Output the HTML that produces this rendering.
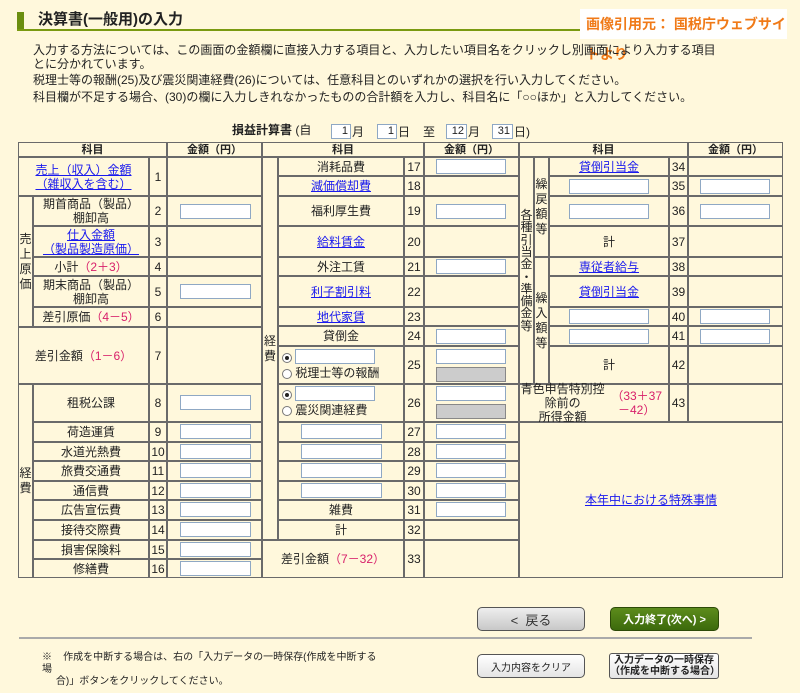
<!DOCTYPE html>
<html><head><meta charset="utf-8">
<style>
*{margin:0;padding:0;box-sizing:border-box}
body{width:800px;height:693px;background:#fff8dc;font-family:"Liberation Sans","Noto Sans CJK JP",sans-serif;color:#222;position:relative;overflow:hidden;font-size:12px}
.a{position:absolute}
.c{position:absolute;border:1px solid #6a6a6a;display:flex;align-items:center;justify-content:center;text-align:center;font-size:12px;line-height:14px}
.h{font-weight:bold;font-size:11px}
.in{position:absolute;background:#fff;border:1px solid #8fa8c4;height:15px}
.g{position:absolute;background:#ccc;border:1px solid #888;height:15px}
a,.lk{color:#1a1aee;text-decoration:underline}
.p{color:#d8206a}
.v{line-height:15px}
.rd{display:inline-block;width:10px;height:10px;border:1px solid #777;border-radius:50%;background:#fff;vertical-align:middle;position:relative}
.rd.on:after{content:"";position:absolute;left:2px;top:2px;width:4px;height:4px;border-radius:50%;background:#222}
.btn{position:absolute;border-radius:5px;display:flex;align-items:center;justify-content:center;text-align:center}
</style></head><body>
<div class="a" style="left:17px;top:12px;width:7px;height:17px;background:#6b8e0f"></div>
<div class="a" style="left:38px;top:10px;font-size:15px;font-weight:bold;line-height:20px">決算書(一般用)の入力</div>
<div class="a" style="left:17px;top:29px;width:566px;height:2px;background:#7a9a10"></div>
<div class="a" style="left:580px;top:9px;width:207px;height:30px;background:#fff;color:#f07a18;font-weight:bold;font-size:14px;line-height:30px;padding-left:6px">画像引用元： 国税庁ウェブサイトより</div>
<div class="a" style="left:33px;top:43px;line-height:14px;font-size:12px">入力する方法については、この画面の金額欄に直接入力する項目と、入力したい項目名をクリックし別画面により入力する項目<br>とに分かれています。</div>
<div class="a" style="left:33px;top:73px;line-height:14px">税理士等の報酬(25)及び震災関連経費(26)については、任意科目とのいずれかの選択を行い入力してください。</div>
<div class="a" style="left:33px;top:90px;line-height:14px">科目欄が不足する場合、(30)の欄に入力しきれなかったものの合計額を入力し、科目名に「○○ほか」と入力してください。</div>

<div class="a" style="left:232px;top:123px;line-height:15px"><b>損益計算書</b> (自</div>
<div class="in" style="left:331px;top:124px;width:20px;font-size:11px;text-align:right;line-height:13px;padding-right:2px">1</div><div class="a" style="left:352px;top:123px">月</div>
<div class="in" style="left:377px;top:124px;width:20px;font-size:11px;text-align:right;line-height:13px;padding-right:2px">1</div><div class="a" style="left:398px;top:123px">日</div>
<div class="a" style="left:423px;top:123px">至</div>
<div class="in" style="left:446px;top:124px;width:21px;font-size:11px;text-align:right;line-height:13px;padding-right:2px">12</div><div class="a" style="left:468px;top:123px">月</div>
<div class="in" style="left:492px;top:124px;width:21px;font-size:11px;text-align:right;line-height:13px;padding-right:2px">31</div><div class="a" style="left:514px;top:123px">日)</div>

<!-- header -->
<div class="c h" style="left:18px;top:142px;width:149px;height:15px">科目</div>
<div class="c h" style="left:167px;top:142px;width:95px;height:15px">金額（円）</div>
<div class="c h" style="left:262px;top:142px;width:162px;height:15px">科目</div>
<div class="c h" style="left:424px;top:142px;width:95px;height:15px">金額（円）</div>
<div class="c h" style="left:519px;top:142px;width:169px;height:15px">科目</div>
<div class="c h" style="left:688px;top:142px;width:95px;height:15px">金額（円）</div>

<!-- left -->
<div class="c" style="left:18px;top:157px;width:131px;height:39px"><span class="lk">売上（収入）金額<br>（雑収入を含む）</span></div>
<div class="c" style="left:149px;top:157px;width:18px;height:39px">1</div>
<div class="c" style="left:167px;top:157px;width:95px;height:39px"></div>
<div class="c v" style="left:18px;top:196px;width:15px;height:131px">売<br>上<br>原<br>価</div>
<div class="c" style="left:33px;top:196px;width:116px;height:30px">期首商品（製品）<br>棚卸高</div>
<div class="c" style="left:149px;top:196px;width:18px;height:30px">2</div>
<div class="c" style="left:167px;top:196px;width:95px;height:30px"></div>
<div class="c" style="left:33px;top:226px;width:116px;height:31px"><span class="lk">仕入金額<br>（製品製造原価）</span></div>
<div class="c" style="left:149px;top:226px;width:18px;height:31px">3</div>
<div class="c" style="left:167px;top:226px;width:95px;height:31px"></div>
<div class="c" style="left:33px;top:257px;width:116px;height:19px">小計<span class="p">（2＋3）</span></div>
<div class="c" style="left:149px;top:257px;width:18px;height:19px">4</div>
<div class="c" style="left:167px;top:257px;width:95px;height:19px"></div>
<div class="c" style="left:33px;top:276px;width:116px;height:31px">期末商品（製品）<br>棚卸高</div>
<div class="c" style="left:149px;top:276px;width:18px;height:31px">5</div>
<div class="c" style="left:167px;top:276px;width:95px;height:31px"></div>
<div class="c" style="left:33px;top:307px;width:116px;height:20px">差引原価<span class="p">（4－5）</span></div>
<div class="c" style="left:149px;top:307px;width:18px;height:20px">6</div>
<div class="c" style="left:167px;top:307px;width:95px;height:20px"></div>
<div class="c" style="left:18px;top:327px;width:131px;height:57px">差引金額<span class="p">（1－6）</span></div>
<div class="c" style="left:149px;top:327px;width:18px;height:57px">7</div>
<div class="c" style="left:167px;top:327px;width:95px;height:57px"></div>
<div class="c v" style="left:18px;top:384px;width:15px;height:194px">経<br>費</div>
<div class="c" style="left:33px;top:384px;width:116px;height:38px">租税公課</div>
<div class="c" style="left:149px;top:384px;width:18px;height:38px">8</div>
<div class="c" style="left:167px;top:384px;width:95px;height:38px"></div>
<div class="c" style="left:33px;top:422px;width:116px;height:20px">荷造運賃</div><div class="c" style="left:149px;top:422px;width:18px;height:20px">9</div><div class="c" style="left:167px;top:422px;width:95px;height:20px"></div>
<div class="c" style="left:33px;top:442px;width:116px;height:19px">水道光熱費</div><div class="c" style="left:149px;top:442px;width:18px;height:19px">10</div><div class="c" style="left:167px;top:442px;width:95px;height:19px"></div>
<div class="c" style="left:33px;top:461px;width:116px;height:20px">旅費交通費</div><div class="c" style="left:149px;top:461px;width:18px;height:20px">11</div><div class="c" style="left:167px;top:461px;width:95px;height:20px"></div>
<div class="c" style="left:33px;top:481px;width:116px;height:19px">通信費</div><div class="c" style="left:149px;top:481px;width:18px;height:19px">12</div><div class="c" style="left:167px;top:481px;width:95px;height:19px"></div>
<div class="c" style="left:33px;top:500px;width:116px;height:20px">広告宣伝費</div><div class="c" style="left:149px;top:500px;width:18px;height:20px">13</div><div class="c" style="left:167px;top:500px;width:95px;height:20px"></div>
<div class="c" style="left:33px;top:520px;width:116px;height:20px">接待交際費</div><div class="c" style="left:149px;top:520px;width:18px;height:20px">14</div><div class="c" style="left:167px;top:520px;width:95px;height:20px"></div>
<div class="c" style="left:33px;top:540px;width:116px;height:19px">損害保険料</div><div class="c" style="left:149px;top:540px;width:18px;height:19px">15</div><div class="c" style="left:167px;top:540px;width:95px;height:19px"></div>
<div class="c" style="left:33px;top:559px;width:116px;height:19px">修繕費</div><div class="c" style="left:149px;top:559px;width:18px;height:19px">16</div><div class="c" style="left:167px;top:559px;width:95px;height:19px"></div>
<div class="in" style="left:180px;top:204px;width:71px"></div>
<div class="in" style="left:180px;top:284px;width:71px"></div>
<div class="in" style="left:180px;top:395px;width:71px"></div>
<div class="in" style="left:180px;top:424px;width:71px"></div>
<div class="in" style="left:180px;top:444px;width:71px"></div>
<div class="in" style="left:180px;top:463px;width:71px"></div>
<div class="in" style="left:180px;top:483px;width:71px"></div>
<div class="in" style="left:180px;top:502px;width:71px"></div>
<div class="in" style="left:180px;top:522px;width:71px"></div>
<div class="in" style="left:180px;top:542px;width:71px"></div>
<div class="in" style="left:180px;top:561px;width:71px"></div>

<!-- middle -->
<div class="c v" style="left:262px;top:157px;width:16px;height:383px">経<br>費</div>
<div class="c" style="left:278px;top:157px;width:126px;height:19px">消耗品費</div><div class="c" style="left:404px;top:157px;width:20px;height:19px">17</div><div class="c" style="left:424px;top:157px;width:95px;height:19px"></div>
<div class="c" style="left:278px;top:176px;width:126px;height:20px"><span class="lk">減価償却費</span></div><div class="c" style="left:404px;top:176px;width:20px;height:20px">18</div><div class="c" style="left:424px;top:176px;width:95px;height:20px"></div>
<div class="c" style="left:278px;top:196px;width:126px;height:30px">福利厚生費</div><div class="c" style="left:404px;top:196px;width:20px;height:30px">19</div><div class="c" style="left:424px;top:196px;width:95px;height:30px"></div>
<div class="c" style="left:278px;top:226px;width:126px;height:31px"><span class="lk">給料賃金</span></div><div class="c" style="left:404px;top:226px;width:20px;height:31px">20</div><div class="c" style="left:424px;top:226px;width:95px;height:31px"></div>
<div class="c" style="left:278px;top:257px;width:126px;height:19px">外注工賃</div><div class="c" style="left:404px;top:257px;width:20px;height:19px">21</div><div class="c" style="left:424px;top:257px;width:95px;height:19px"></div>
<div class="c" style="left:278px;top:276px;width:126px;height:31px"><span class="lk">利子割引料</span></div><div class="c" style="left:404px;top:276px;width:20px;height:31px">22</div><div class="c" style="left:424px;top:276px;width:95px;height:31px"></div>
<div class="c" style="left:278px;top:307px;width:126px;height:19px"><span class="lk">地代家賃</span></div><div class="c" style="left:404px;top:307px;width:20px;height:19px">23</div><div class="c" style="left:424px;top:307px;width:95px;height:19px"></div>
<div class="c" style="left:278px;top:326px;width:126px;height:20px">貸倒金</div><div class="c" style="left:404px;top:326px;width:20px;height:20px">24</div><div class="c" style="left:424px;top:326px;width:95px;height:20px"></div>
<div class="c" style="left:278px;top:346px;width:126px;height:38px;justify-content:flex-start;align-items:flex-start"></div><div class="c" style="left:404px;top:346px;width:20px;height:38px">25</div><div class="c" style="left:424px;top:346px;width:95px;height:38px"></div>
<div class="c" style="left:278px;top:384px;width:126px;height:38px"></div><div class="c" style="left:404px;top:384px;width:20px;height:38px">26</div><div class="c" style="left:424px;top:384px;width:95px;height:38px"></div>
<div class="c" style="left:278px;top:422px;width:126px;height:20px"></div><div class="c" style="left:404px;top:422px;width:20px;height:20px">27</div><div class="c" style="left:424px;top:422px;width:95px;height:20px"></div>
<div class="c" style="left:278px;top:442px;width:126px;height:19px"></div><div class="c" style="left:404px;top:442px;width:20px;height:19px">28</div><div class="c" style="left:424px;top:442px;width:95px;height:19px"></div>
<div class="c" style="left:278px;top:461px;width:126px;height:20px"></div><div class="c" style="left:404px;top:461px;width:20px;height:20px">29</div><div class="c" style="left:424px;top:461px;width:95px;height:20px"></div>
<div class="c" style="left:278px;top:481px;width:126px;height:19px"></div><div class="c" style="left:404px;top:481px;width:20px;height:19px">30</div><div class="c" style="left:424px;top:481px;width:95px;height:19px"></div>
<div class="c" style="left:278px;top:500px;width:126px;height:20px">雑費</div><div class="c" style="left:404px;top:500px;width:20px;height:20px">31</div><div class="c" style="left:424px;top:500px;width:95px;height:20px"></div>
<div class="c" style="left:278px;top:520px;width:126px;height:20px">計</div><div class="c" style="left:404px;top:520px;width:20px;height:20px">32</div><div class="c" style="left:424px;top:520px;width:95px;height:20px"></div>
<div class="c" style="left:262px;top:540px;width:142px;height:38px">差引金額<span class="p">（7－32）</span></div><div class="c" style="left:404px;top:540px;width:20px;height:38px">33</div><div class="c" style="left:424px;top:540px;width:95px;height:38px"></div>
<!-- middle inputs -->
<div class="in" style="left:436px;top:159px;width:70px"></div>
<div class="in" style="left:436px;top:204px;width:70px"></div>
<div class="in" style="left:436px;top:259px;width:70px"></div>
<div class="in" style="left:436px;top:329px;width:70px"></div>
<div class="in" style="left:436px;top:349px;width:70px"></div>
<div class="g" style="left:436px;top:367px;width:70px"></div>
<div class="in" style="left:436px;top:386px;width:70px"></div>
<div class="g" style="left:436px;top:404px;width:70px"></div>
<div class="in" style="left:436px;top:424px;width:70px"></div>
<div class="in" style="left:436px;top:444px;width:70px"></div>
<div class="in" style="left:436px;top:463px;width:70px"></div>
<div class="in" style="left:436px;top:483px;width:70px"></div>
<div class="in" style="left:436px;top:502px;width:70px"></div>
<div class="in" style="left:301px;top:424px;width:81px"></div>
<div class="in" style="left:301px;top:444px;width:81px"></div>
<div class="in" style="left:301px;top:463px;width:81px"></div>
<div class="in" style="left:301px;top:483px;width:81px"></div>
<div class="a" style="left:282px;top:350px"><span class="rd on"></span></div>
<div class="in" style="left:295px;top:349px;width:80px"></div>
<div class="a" style="left:282px;top:366px;line-height:15px"><span class="rd"></span> 税理士等の報酬</div>
<div class="a" style="left:282px;top:387px"><span class="rd on"></span></div>
<div class="in" style="left:295px;top:386px;width:80px"></div>
<div class="a" style="left:282px;top:403px;line-height:15px"><span class="rd"></span> 震災関連経費</div>

<!-- right -->
<div class="c" style="left:519px;top:157px;width:15px;height:227px;line-height:12.3px">各<br>種<br>引<br>当<br>金<br>・<br>準<br>備<br>金<br>等</div>
<div class="c v" style="left:534px;top:157px;width:15px;height:100px">繰<br>戻<br>額<br>等</div>
<div class="c v" style="left:534px;top:257px;width:15px;height:127px">繰<br>入<br>額<br>等</div>
<div class="c" style="left:549px;top:157px;width:120px;height:19px"><span class="lk">貸倒引当金</span></div><div class="c" style="left:669px;top:157px;width:19px;height:19px">34</div><div class="c" style="left:688px;top:157px;width:95px;height:19px"></div>
<div class="c" style="left:549px;top:176px;width:120px;height:20px"></div><div class="c" style="left:669px;top:176px;width:19px;height:20px">35</div><div class="c" style="left:688px;top:176px;width:95px;height:20px"></div>
<div class="c" style="left:549px;top:196px;width:120px;height:30px"></div><div class="c" style="left:669px;top:196px;width:19px;height:30px">36</div><div class="c" style="left:688px;top:196px;width:95px;height:30px"></div>
<div class="c" style="left:549px;top:226px;width:120px;height:31px">計</div><div class="c" style="left:669px;top:226px;width:19px;height:31px">37</div><div class="c" style="left:688px;top:226px;width:95px;height:31px"></div>
<div class="c" style="left:549px;top:257px;width:120px;height:19px"><span class="lk">専従者給与</span></div><div class="c" style="left:669px;top:257px;width:19px;height:19px">38</div><div class="c" style="left:688px;top:257px;width:95px;height:19px"></div>
<div class="c" style="left:549px;top:276px;width:120px;height:31px"><span class="lk">貸倒引当金</span></div><div class="c" style="left:669px;top:276px;width:19px;height:31px">39</div><div class="c" style="left:688px;top:276px;width:95px;height:31px"></div>
<div class="c" style="left:549px;top:307px;width:120px;height:19px"></div><div class="c" style="left:669px;top:307px;width:19px;height:19px">40</div><div class="c" style="left:688px;top:307px;width:95px;height:19px"></div>
<div class="c" style="left:549px;top:326px;width:120px;height:20px"></div><div class="c" style="left:669px;top:326px;width:19px;height:20px">41</div><div class="c" style="left:688px;top:326px;width:95px;height:20px"></div>
<div class="c" style="left:549px;top:346px;width:120px;height:38px">計</div><div class="c" style="left:669px;top:346px;width:19px;height:38px">42</div><div class="c" style="left:688px;top:346px;width:95px;height:38px"></div>
<div class="c" style="left:519px;top:384px;width:150px;height:38px">青色申告特別控除前の<br>所得金額<span class="p">（33＋37－42）</span></div><div class="c" style="left:669px;top:384px;width:19px;height:38px">43</div><div class="c" style="left:688px;top:384px;width:95px;height:38px"></div>
<div class="c" style="left:519px;top:422px;width:264px;height:156px"><span class="lk">本年中における特殊事情</span></div>
<div class="in" style="left:569px;top:179px;width:80px"></div>
<div class="in" style="left:569px;top:204px;width:80px"></div>
<div class="in" style="left:569px;top:309px;width:80px"></div>
<div class="in" style="left:569px;top:329px;width:80px"></div>
<div class="in" style="left:700px;top:179px;width:70px"></div>
<div class="in" style="left:700px;top:204px;width:70px"></div>
<div class="in" style="left:700px;top:309px;width:70px"></div>
<div class="in" style="left:700px;top:329px;width:70px"></div>

<!-- buttons -->
<div class="btn" style="left:477px;top:607px;width:108px;height:24px;border:1px solid #555;background:linear-gradient(#eee,#c8c8c8);font-size:13px;color:#333">&lt;&nbsp; 戻る</div>
<div class="btn" style="left:610px;top:607px;width:109px;height:24px;border:1px solid #2d4a08;background:linear-gradient(#5d8c1c,#3c6a0c);font-size:11px;color:#fff;font-weight:bold">入力終了(次へ) &gt;</div>
<div class="a" style="left:19px;top:637px;width:733px;height:2px;background:#aaa"></div>
<div class="a" style="left:42px;top:652px;font-size:10px;line-height:12px;width:340px">※&nbsp;&nbsp;&nbsp;&nbsp;作成を中断する場合は、右の「入力データの一時保存(作成を中断する場<br>&nbsp;&nbsp;&nbsp;&nbsp;&nbsp;合)」ボタンをクリックしてください。</div>
<div class="btn" style="left:477px;top:654px;width:108px;height:24px;border:1px solid #555;background:linear-gradient(#fff,#e4e4e4);font-size:10px">入力内容をクリア</div>
<div class="btn" style="left:609px;top:653px;width:110px;height:26px;border:1px solid #555;border-radius:3px;background:linear-gradient(#fff,#e4e4e4);font-size:10px;line-height:11px;font-weight:bold">入力データの一時保存<br>（作成を中断する場合）</div>
</body></html>
